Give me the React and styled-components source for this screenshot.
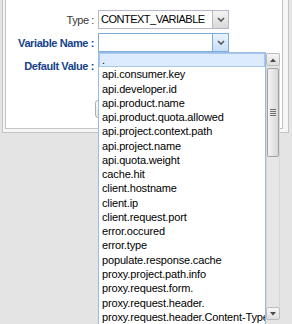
import React from 'react';
import styled, { createGlobalStyle } from 'styled-components';

const GlobalStyle = createGlobalStyle`
	body {
		margin: 0;
		padding: 0;
		background: #e4e4e4;
		font-family: "Liberation Sans", Arial, sans-serif;
	}
`;

const Page = styled.div`
	width: 292px;
	height: 324px;
	overflow: hidden;
	background: #e4e4e4;
`;

const OuterFrame = styled.div`
	margin: -8px 0 0 2px;
	width: 287px;
	box-sizing: border-box;
	border: 1px solid #c4c4c4;
	background: #f6f6f6;
	padding: 2px 5px 3px 2px;
`;

const InnerFrame = styled.div`
	border: 1px solid #c4c4c4;
	background: #fff;
	padding: 14px 0 10px 0;
`;

const Form = styled.div`
	display: grid;
	grid-template-columns: 92px 1fr;
	row-gap: 4px;
	align-items: center;
`;

const Label = styled.label`
	text-align: right;
	padding-right: 4px;
	font-size: 11px;
	letter-spacing: -0.4px;
	white-space: nowrap;
	color: ${p => (p.$strong ? '#15428b' : '#3a3a3a')};
	font-weight: ${p => (p.$strong ? 'bold' : 'normal')};
`;

const Combo = styled.div`
	position: relative;
	display: flex;
	width: 131px;
	height: 19px;
`;

const Input = styled.div`
	flex: 1;
	box-sizing: border-box;
	height: 19px;
	border: 1px solid ${p => (p.$focus ? '#7eadd9' : '#b5b8c8')};
	background: #fff;
	padding: 0 2px;
	font-size: 11px;
	line-height: 17px;
	letter-spacing: -0.5px;
	color: #000;
	white-space: nowrap;
	overflow: hidden;
`;

const Trigger = styled.div`
	width: 16px;
	box-sizing: border-box;
	height: 19px;
	border: 1px solid ${p => (p.$focus ? '#7eadd9' : '#b5b8c8')};
	border-left: none;
	background: ${p => (p.$focus
		? 'linear-gradient(#e9f3fe, #c9def7)'
		: 'linear-gradient(#f4f4f4, #d9d9d9)')};
	display: flex;
	align-items: center;
	justify-content: center;
`;

const Field = styled.div`
	width: 131px;
	height: 19px;
`;

const ButtonBar = styled.div`
	margin-top: 25px;
	padding-left: 89px;
`;

const Button = styled.div`
	width: 90px;
	height: 18px;
	box-sizing: border-box;
	border: 1px solid #b0b0b0;
	border-radius: 3px;
	background: linear-gradient(#fafafa, #e6e6e6);
`;

const Popup = styled.div`
	position: absolute;
	top: 19px;
	left: 0;
	display: flex;
	align-items: flex-start;
	z-index: 10;
`;

const List = styled.div`
	width: 168px;
	height: 290px;
	box-sizing: border-box;
	border: 1px solid #99bbe8;
	background: #fff;
	overflow: hidden;
`;

const Item = styled.div`
	height: 14.28px;
	box-sizing: border-box;
	border: 1px solid ${p => (p.$selected ? '#a9c8ee' : 'transparent')};
	background: ${p => (p.$selected ? '#dcebfd' : 'transparent')};
	padding-left: 2px;
	font-size: 11px;
	line-height: 12.28px;
	letter-spacing: -0.15px;
	color: #000;
	white-space: nowrap;
`;

const Scrollbar = styled.div`
	width: 14px;
	height: 267px;
	margin-top: 1px;
	display: flex;
	flex-direction: column;
	background: #e9e9e9;
`;

const ScrollButton = styled.div`
	height: 13px;
	box-sizing: border-box;
	border: 1px solid #bcbcbc;
	border-radius: 2px;
	background: linear-gradient(#f6f6f6, #dedede);
	display: flex;
	align-items: center;
	justify-content: center;
`;

const Track = styled.div`
	flex: 1;
	padding: 2px 0;
	border-left: 1px solid #d6d6d6;
	border-right: 1px solid #d6d6d6;
	background: #e6e6e6;
`;

const Thumb = styled.div`
	height: 89px;
	box-sizing: border-box;
	border: 1px solid #a2a2a2;
	border-radius: 2px;
	background: linear-gradient(90deg, #f3f3f3, #d8d8d8);
	display: flex;
	align-items: center;
	justify-content: center;
`;

const Grip = styled.div`
	width: 6px;
	height: 7px;
	background: repeating-linear-gradient(#6f6f6f 0 1px, transparent 1px 2px);
`;

const Chevron = () => (
	<svg width="8" height="5" viewBox="0 0 8 5">
		<path d="M1 1 L4 4 L7 1" fill="none" stroke="#555" strokeWidth="1.6" />
	</svg>
);

const Arrow = ({ down }) => (
	<svg width="6" height="4" viewBox="0 0 6 4">
		<path d={down ? 'M0 0 L6 0 L3 3.5 Z' : 'M0 4 L6 4 L3 0.5 Z'} fill="#4a4a4a" />
	</svg>
);

const variables = [
	'.',
	'api.consumer.key',
	'api.developer.id',
	'api.product.name',
	'api.product.quota.allowed',
	'api.project.context.path',
	'api.project.name',
	'api.quota.weight',
	'cache.hit',
	'client.hostname',
	'client.ip',
	'client.request.port',
	'error.occured',
	'error.type',
	'populate.response.cache',
	'proxy.project.path.info',
	'proxy.request.form.',
	'proxy.request.header.',
	'proxy.request.header.Content-Type',
];

const App = () => {
	return (
		<Page>
			<GlobalStyle />
			<OuterFrame>
				<InnerFrame>
					<Form>
						<Label>Type :</Label>
						<Combo>
							<Input>CONTEXT_VARIABLE</Input>
							<Trigger><Chevron /></Trigger>
						</Combo>

						<Label $strong>Variable Name :</Label>
						<Combo>
							<Input $focus />
							<Trigger $focus><Chevron /></Trigger>
							<Popup>
								<List>
									{variables.map((v, i) => (
										<Item key={v} $selected={i === 0}>{v}</Item>
									))}
								</List>
								<Scrollbar>
									<ScrollButton><Arrow /></ScrollButton>
									<Track>
										<Thumb><Grip /></Thumb>
									</Track>
									<ScrollButton><Arrow down /></ScrollButton>
								</Scrollbar>
							</Popup>
						</Combo>

						<Label $strong>Default Value :</Label>
						<Field />
					</Form>
					<ButtonBar>
						<Button />
					</ButtonBar>
				</InnerFrame>
			</OuterFrame>
		</Page>
	);
};

export default App;
